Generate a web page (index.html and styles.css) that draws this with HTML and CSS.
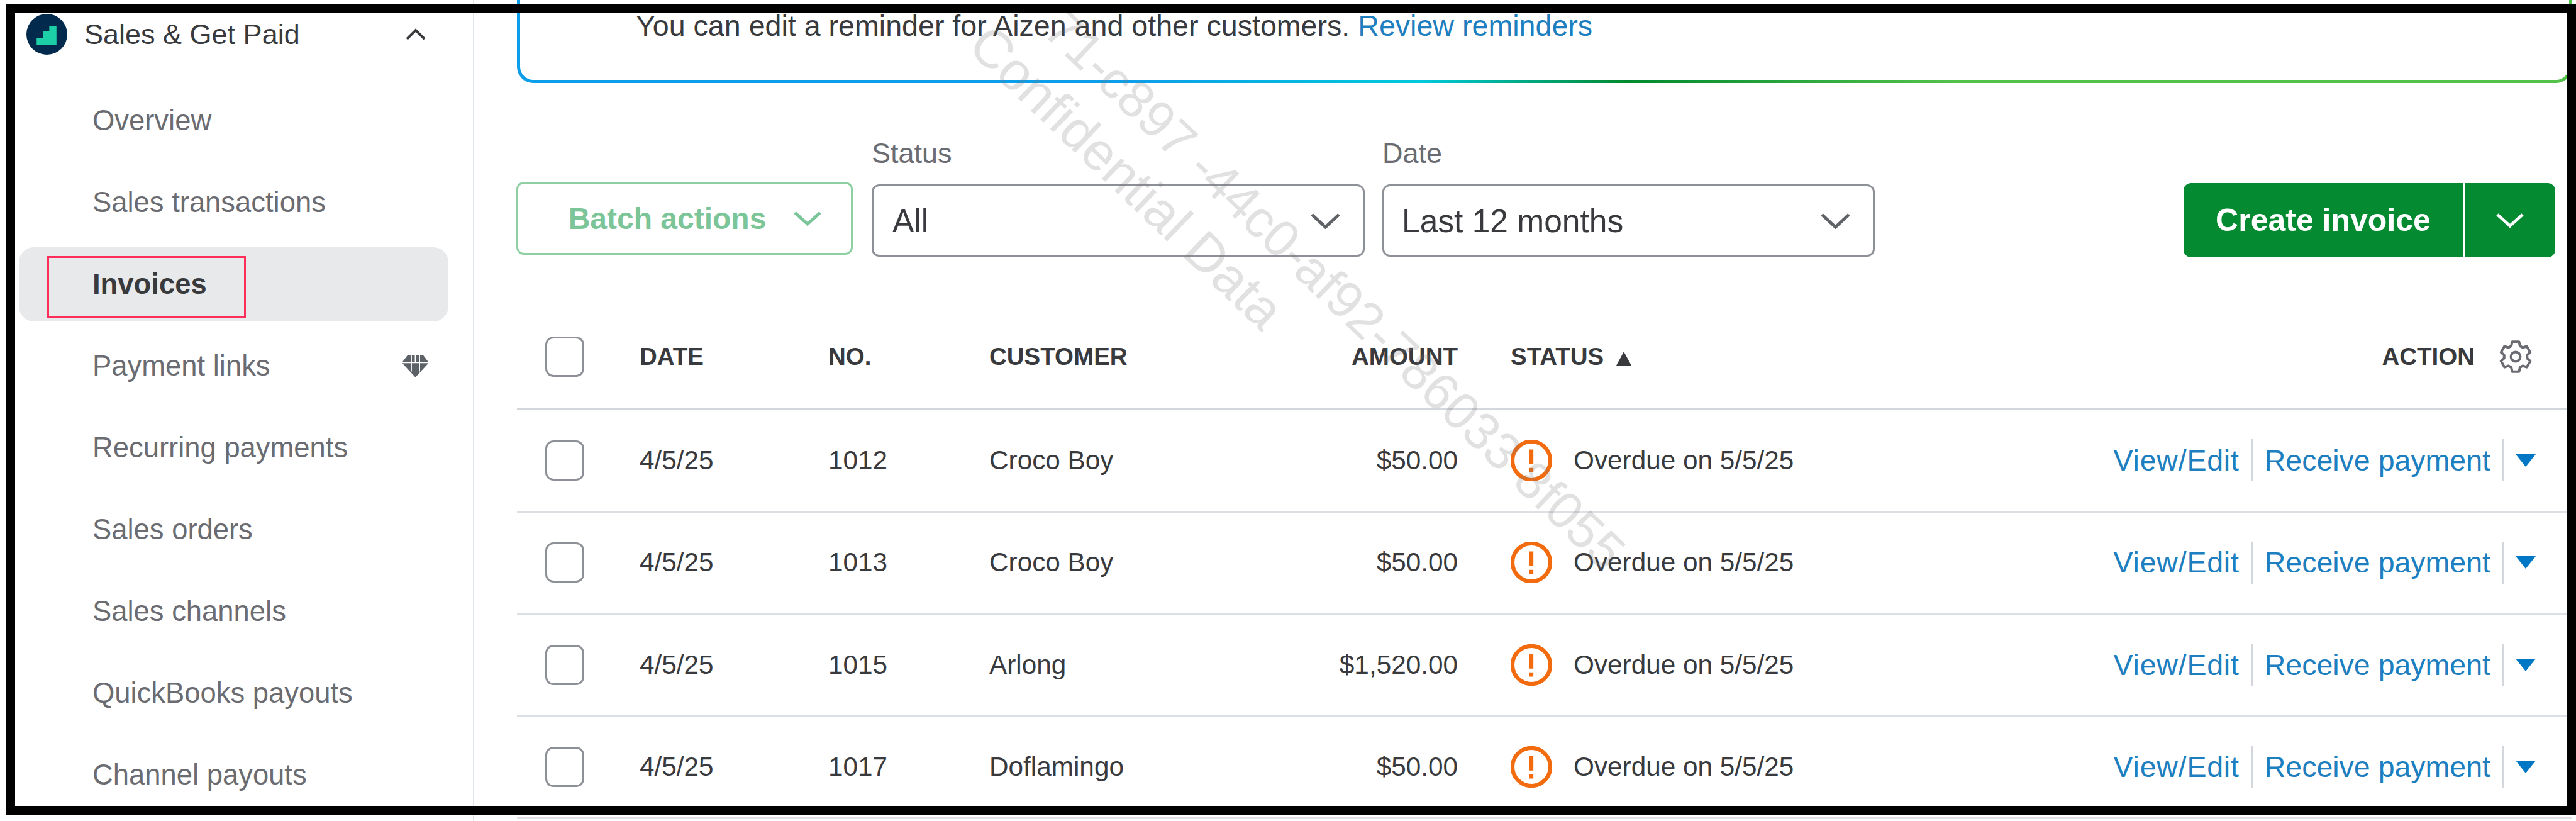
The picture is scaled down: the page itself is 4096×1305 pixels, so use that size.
FILE: index.html
```html
<!DOCTYPE html>
<html>
<head>
    <meta charset="utf-8">
    <title>Invoices</title>
    <link rel="stylesheet" href="styles.css">
</head>
<body>
    <div class="page">
        <!-- Sidebar -->
        <aside class="sidebar">
            <div class="nav-head">
                <svg class="logo" viewBox="0 0 68 68"><circle cx="34" cy="34" r="34" fill="#012a4d"/><polygon points="17,40 17,52 50,52 50,20 38,20 38,29 28,29 28,40" fill="#1ccfa6"/></svg>
                <span class="nav-title">Sales &amp; Get Paid</span>
                <svg class="nav-chevron" viewBox="0 0 32 19"><path d="M2 17 16 3l14 14"/></svg>
            </div>
            <nav class="nav-list">
                <a class="nav-item">Overview</a>
                <a class="nav-item">Sales transactions</a>
                <a class="nav-item active">Invoices<span class="highlight"></span></a>
                <a class="nav-item">Payment links
                    <svg class="gem" viewBox="0 0 46 38"><polygon points="10,0 36,0 46,13 23,38 0,13" fill="#5c6268"/><path d="M0 13h46M16 0v28M30 0v28M23 0v13" stroke="#fff" stroke-width="2"/></svg>
                </a>
                <a class="nav-item">Recurring payments</a>
                <a class="nav-item">Sales orders</a>
                <a class="nav-item">Sales channels</a>
                <a class="nav-item">QuickBooks payouts</a>
                <a class="nav-item">Channel payouts</a>
            </nav>
        </aside>

        <!-- Main -->
        <main class="main">
            <div class="banner">You can edit a reminder for Aizen and other customers. <a class="link">Review reminders</a></div>

            <div class="toolbar">
                <button class="batch">Batch actions
                    <svg class="chevron" viewBox="0 0 46 24"><path d="M3 3l20 18L43 3"/></svg>
                </button>
                <div class="field status-field">
                    <label>Status</label>
                    <div class="select">All
                        <svg class="chevron" viewBox="0 0 49 26"><path d="M3 3l21.500 20L46 3"/></svg>
                    </div>
                </div>
                <div class="field date-field">
                    <label>Date</label>
                    <div class="select">Last 12 months
                        <svg class="chevron" viewBox="0 0 49 26"><path d="M3 3l21.500 20L46 3"/></svg>
                    </div>
                </div>
                <div class="create">
                    <span class="create-label">Create invoice</span>
                    <span class="create-more"><svg class="chevron" viewBox="0 0 46 24"><path d="M3 3l20 18L43 3"/></svg></span>
                </div>
            </div>

            <div class="table">
                <div class="row head">
                    <span class="checkbox"></span>
                    <span>DATE</span>
                    <span>NO.</span>
                    <span>CUSTOMER</span>
                    <span class="amount">AMOUNT</span>
                    <span class="status">STATUS <i class="sort"></i></span>
                    <span class="action">ACTION
                        <svg class="gear" viewBox="0 0 24 24"><polygon points="8.93,4.4 9.57,1.48 14.43,1.48 15.07,4.4 17.05,5.54 19.9,4.63 22.33,8.84 20.12,10.86 20.12,13.14 22.33,15.16 19.9,19.37 17.05,18.46 15.07,19.6 14.43,22.52 9.57,22.52 8.93,19.6 6.95,18.46 4.1,19.37 1.67,15.16 3.88,13.14 3.88,10.86 1.67,8.84 4.1,4.63 6.95,5.54"/><circle cx="12" cy="12" r="3.3"/></svg>
                    </span>
                </div>

                <div class="row">
                    <span class="checkbox"></span>
                    <span>4/5/25</span>
                    <span>1012</span>
                    <span>Croco Boy</span>
                    <span class="amount">$50.00</span>
                    <span class="status"><svg class="alert" viewBox="0 0 68 68"><circle cx="34" cy="34" r="31"/><path d="M34 16v24M34 46v7"/></svg>Overdue on 5/5/25</span>
                    <span class="links"><a class="edit">View/Edit</a><i class="sep"></i><a>Receive payment</a><i class="sep"></i><i class="drop"></i></span>
                </div>
                <div class="row">
                    <span class="checkbox"></span>
                    <span>4/5/25</span>
                    <span>1013</span>
                    <span>Croco Boy</span>
                    <span class="amount">$50.00</span>
                    <span class="status"><svg class="alert" viewBox="0 0 68 68"><circle cx="34" cy="34" r="31"/><path d="M34 16v24M34 46v7"/></svg>Overdue on 5/5/25</span>
                    <span class="links"><a class="edit">View/Edit</a><i class="sep"></i><a>Receive payment</a><i class="sep"></i><i class="drop"></i></span>
                </div>
                <div class="row">
                    <span class="checkbox"></span>
                    <span>4/5/25</span>
                    <span>1015</span>
                    <span>Arlong</span>
                    <span class="amount">$1,520.00</span>
                    <span class="status"><svg class="alert" viewBox="0 0 68 68"><circle cx="34" cy="34" r="31"/><path d="M34 16v24M34 46v7"/></svg>Overdue on 5/5/25</span>
                    <span class="links"><a class="edit">View/Edit</a><i class="sep"></i><a>Receive payment</a><i class="sep"></i><i class="drop"></i></span>
                </div>
                <div class="row">
                    <span class="checkbox"></span>
                    <span>4/5/25</span>
                    <span>1017</span>
                    <span>Doflamingo</span>
                    <span class="amount">$50.00</span>
                    <span class="status"><svg class="alert" viewBox="0 0 68 68"><circle cx="34" cy="34" r="31"/><path d="M34 16v24M34 46v7"/></svg>Overdue on 5/5/25</span>
                    <span class="links"><a class="edit">View/Edit</a><i class="sep"></i><a>Receive payment</a><i class="sep"></i><i class="drop"></i></span>
                </div>
            </div>
        </main>

        <!-- Watermark and screenshot frame lie over the page -->
        <div class="mark mark-id">71-c897 -44c0-af92-786033 8f055</div>
        <div class="mark mark-text">Confidential Data</div>
        <div class="frame"></div>
    </div>
</body>
</html>
```

FILE: styles.css
```css
* {
    box-sizing: border-box;
}
body {
    margin: 0;
    background: #fff;
    color: #393a3d;
    font-family: "Liberation Sans", Arial, sans-serif;
    overflow: hidden;
}
svg {
    display: block;
    flex: none;
}
.page {
    position: relative;
    display: flex;
    width: 4096px;
    height: 1305px;
    overflow: hidden;
}

/* Sidebar */
.sidebar {
    flex: none;
    width: 754px;
    border-right: 2px solid #dfe4ea;
}
.nav-head {
    display: flex;
    align-items: center;
    gap: 27px;
    height: 109px;
    padding: 0 75px 0 42px;
    font-size: 45px;
}
.logo {
    width: 65px;
    height: 65px;
}
.nav-title {
    flex: 1;
}
.nav-chevron {
    width: 32px;
    height: 19px;
    fill: none;
    stroke: #393a3d;
    stroke-width: 4;
}
.nav-list {
    display: flex;
    flex-direction: column;
    gap: 12px;
    margin: 24px 39px 0 30px;
}
.nav-item {
    position: relative;
    display: flex;
    align-items: center;
    justify-content: space-between;
    height: 118px;
    padding: 0 31px 0 117px;
    border-radius: 24px;
    color: #6b6c72;
    font-size: 45.400px;
}
.nav-item.active {
    background: #e8e9eb;
    color: #393a3d;
    font-weight: bold;
}
.highlight {
    position: absolute;
    left: 45px;
    top: 14px;
    width: 316px;
    height: 98px;
    border: 3px solid #ff2d5a;
}
.gem {
    width: 43px;
    height: 36px;
}

/* Main */
.main {
    flex: 1;
    min-width: 0;
    padding: 0 6px 0 68px;
}
.banner {
    height: 172px;
    margin-top: -40px;
    padding: 51px 0 0 184px;
    border: 5px solid transparent;
    border-radius: 26px;
    background: linear-gradient(#fff, #fff) padding-box,
        linear-gradient(90deg, #0d9ee9 0%, #0d9ee9 30%, #00c9dc 44%, #00892e 54%, #53c24b 70%, #53c24b 100%) border-box;
    font-size: 46.600px;
    line-height: 51px;
}
.link {
    color: #1d7fc0;
}
.links a {
    color: #1d7fc0;
}

/* Toolbar */
.toolbar {
    display: flex;
    align-items: flex-end;
    margin: 87px 27px 78px 0;
}
.batch {
    display: flex;
    align-items: center;
    justify-content: center;
    gap: 43px;
    width: 535px;
    height: 116px;
    margin: 0 30px 3px -1px;
    padding: 0 0 0 34px;
    border: 3px solid #8fd0a3;
    border-radius: 12px;
    background: #fff;
    color: #7cc598;
    font-family: "Liberation Sans", Arial, sans-serif;
    font-size: 48px;
    font-weight: bold;
}
.chevron {
    width: 46px;
    height: 24px;
    fill: none;
    stroke: currentColor;
    stroke-width: 5;
}
.field label {
    display: block;
    height: 50px;
    margin-bottom: 24px;
    color: #6b6c72;
    font-size: 45px;
    line-height: 50px;
}
.status-field {
    width: 784px;
    margin-right: 28px;
}
.date-field {
    width: 783px;
}
.select {
    display: flex;
    align-items: center;
    justify-content: space-between;
    height: 115px;
    padding: 0 35px 0 30px;
    border: 3px solid #8d9096;
    border-radius: 12px;
    font-size: 51.500px;
}
.date-field .select {
    padding-left: 28px;
}
.select .chevron {
    width: 49px;
    height: 26px;
    color: #5f6368;
}
.create {
    display: flex;
    height: 118px;
    margin: 0 0 -1px auto;
    border-radius: 12px;
    background: #048a31;
    color: #fff;
    font-size: 50px;
    font-weight: bold;
}
.create-label {
    display: flex;
    align-items: center;
    justify-content: center;
    width: 447px;
    border-right: 3px solid #fff;
}
.create-more {
    display: flex;
    align-items: center;
    justify-content: center;
    width: 144px;
}

/* Table */
.row {
    display: grid;
    grid-template-columns: 150px 300px 256px 400px 345px 1fr auto;
    align-items: center;
    height: 162.500px;
    padding: 0 63px 0 45px;
    border-bottom: 3px solid #dcdfe3;
    font-size: 42.300px;
}
.row.head {
    height: 166px;
    border-bottom: 4px solid #d4d7dc;
    font-size: 38.500px;
    font-weight: bold;
}
.checkbox {
    display: block;
    width: 62px;
    height: 64px;
    border: 3px solid #8d9096;
    border-radius: 13px;
}
.amount {
    text-align: right;
}
.status {
    display: flex;
    align-items: center;
    padding-left: 84px;
}
.row.head .status {
    gap: 20px;
}
.sort {
    width: 0;
    height: 0;
    margin-top: 6px;
    border-left: 12px solid transparent;
    border-right: 12px solid transparent;
    border-bottom: 22px solid #393a3d;
}
.alert {
    width: 66px;
    height: 66px;
    margin-right: 34px;
    fill: none;
    stroke: #f26b0f;
    stroke-width: 6.500;
}
.action {
    display: flex;
    align-items: center;
    gap: 38px;
}
.gear {
    width: 54px;
    height: 56px;
    fill: none;
    stroke: #6b6c72;
    stroke-width: 1.800;
    stroke-linejoin: round;
}
.links {
    display: flex;
    align-items: center;
    gap: 19px;
    margin-right: 0;
    transform: translateX(5px);
    font-size: 46.500px;
    white-space: nowrap;
}
.edit {
    letter-spacing: 0.800px;
}
.sep {
    width: 2px;
    height: 67px;
    background: #d4d7dc;
}
.drop {
    width: 0;
    height: 0;
    border-left: 16px solid transparent;
    border-right: 16px solid transparent;
    border-top: 20px solid #0077c5;
}

/* Watermark */
.mark {
    position: absolute;
    color: rgba(120, 120, 120, 0.22);
    font-size: 82px;
    line-height: 80px;
    white-space: nowrap;
    transform: rotate(43.800deg);
    transform-origin: 0 50%;
    pointer-events: none;
}
.mark-id {
    left: 1675px;
    top: -8px;
}
.mark-text {
    left: 1556px;
    top: 16px;
    font-size: 85px;
}

/* Screenshot frame */
.frame {
    position: absolute;
    left: 9px;
    top: 6px;
    right: 0;
    bottom: 9px;
    border: 15px solid #000;
    pointer-events: none;
}
```
